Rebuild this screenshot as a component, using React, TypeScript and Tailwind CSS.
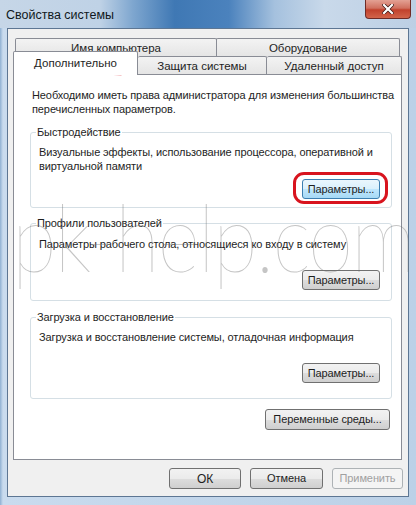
import React from "react";

const Btn = ({
  children,
  className = "",
  disabled = false,
  focused = false,
}: {
  children: React.ReactNode;
  className?: string;
  disabled?: boolean;
  focused?: boolean;
}) => (
  <div
    className={
      "flex items-center justify-center whitespace-nowrap rounded-[3px] border text-[11px] leading-none tracking-[-0.1px] " +
      (focused
        ? "border-[#3c7fb1] bg-[linear-gradient(#eaf6fd_0%,#d9f0fc_50%,#bee6fd_51%,#a7d9f5_100%)] text-[#1e1e1e] "
        : disabled
        ? "border-[#adb2b5] bg-[#f4f4f4] text-[#a0a0a0] "
        : "border-[#707070] bg-[linear-gradient(#f2f2f2_0%,#ebebeb_50%,#dddddd_51%,#cfcfcf_100%)] text-[#1e1e1e] ") +
      className
    }
  >
    {children}
  </div>
);

const Group = ({
  title,
  children,
  className = "",
}: {
  title: string;
  children: React.ReactNode;
  className?: string;
}) => (
  <fieldset className={"ml-[16px] w-[362px] rounded-[3px] border border-[#d5dfe5] " + className}>
    <legend className="ml-[5px] whitespace-nowrap px-[1px] text-[11px] leading-[14px] tracking-[-0.1px]">{title}</legend>
    {children}
  </fieldset>
);

const tabCls =
  "flex justify-center whitespace-nowrap rounded-t-[2px] border border-b-0 border-[#898c95] pt-[2px] text-[11.5px] leading-[14px]";

export default function App() {
  return (
    <div className="relative flex h-[505px] w-[416px] flex-col overflow-hidden bg-[linear-gradient(90deg,#8fb0d2_0px,#c9dbee_3px,#bcd1e7_100%)] font-['Liberation_Sans',Arial,sans-serif] text-[#1e1e1e]">
      {/* title bar */}
      <div className="relative flex h-[28px] items-center bg-[linear-gradient(90deg,#c6d6e7_0%,#bfd2e6_24%,#7ea6cf_32%,#3f78b4_42%,#4b82bd_55%,#a5c1de_66%,#c9d9ea_78%,#bccfe4_100%)]">
        <span className="ml-[6px] mt-[2px] text-[12.5px] text-[#101820]">Свойства системы</span>
        <div className="absolute right-[5px] top-0 flex h-[19px] w-[46px] items-center justify-center rounded-b-[4px] border border-t-0 border-[#6e2b26] bg-[linear-gradient(#e3a194_0%,#d0705f_45%,#c1412c_55%,#d2644a_100%)]">
          <svg width="12" height="10" viewBox="0 0 12 10">
            <path d="M2 1 L10 9 M10 1 L2 9" stroke="#3a1410" strokeWidth="3.6" strokeLinecap="square" />
            <path d="M2 1 L10 9 M10 1 L2 9" stroke="#ffffff" strokeWidth="2.2" strokeLinecap="square" />
          </svg>
        </div>
      </div>

      {/* client area */}
      <div className="ml-[7px] mb-[8px] flex w-[402px] flex-1 flex-col border border-[#5d7693] bg-[#f0f0f0]">
        <div className="ml-[5px] mt-[9px] w-[389px]">
          {/* tabs row 1 */}
          <div className="flex h-[18px] pl-[2px]">
            <div className={tabCls + " w-[202px] bg-[linear-gradient(#f3f3f3,#e5e5e5)]"}>Имя компьютера</div>
            <div className={tabCls + " -ml-px w-[184px] bg-[linear-gradient(#f3f3f3,#e5e5e5)]"}>Оборудование</div>
          </div>
          {/* tabs row 2 */}
          <div className="flex h-[18px] items-end">
            <div className={tabCls + " relative z-10 -mb-px h-[24px] w-[125px] bg-white pt-[4px]"}>Дополнительно</div>
            <div className={tabCls + " h-[18px] w-[129px] border-l-0 bg-[linear-gradient(#f3f3f3,#e5e5e5)]"}>Защита системы</div>
            <div className={tabCls + " h-[18px] w-[135px] border-l-0 bg-[linear-gradient(#f3f3f3,#e5e5e5)]"}>Удаленный доступ</div>
          </div>
          {/* panel */}
          <div className="flex h-[386px] flex-col border border-[#898c95] bg-white text-[11px] leading-[14px] tracking-[-0.1px]">
            <p className="ml-[18px] mt-[13px] whitespace-nowrap">
              Необходимо иметь права администратора для изменения большинства
              <br />
              перечисленных параметров.
            </p>

            <Group title="Быстродействие" className="mt-[9px] pb-[8px]">
              <p className="ml-[8px] mt-[6px] whitespace-nowrap">
                Визуальные эффекты, использование процессора, оперативной и
                <br />
                виртуальной памяти
              </p>
              <div className="mr-[11px] mt-[6px] flex justify-end">
                <Btn focused className="h-[20px] w-[78px]">Параметры...</Btn>
              </div>
            </Group>

            <Group title="Профили пользователей" className="mt-[8px] pb-[10px]">
              <p className="ml-[8px] mt-[7px] whitespace-nowrap">
                Параметры рабочего стола, относящиеся ко входу в систему
              </p>
              <div className="mr-[11px] mt-[19px] flex justify-end">
                <Btn className="h-[20px] w-[78px]">Параметры...</Btn>
              </div>
            </Group>

            <Group title="Загрузка и восстановление" className="mt-[9px] pb-[15px]">
              <p className="ml-[8px] mt-[6px] whitespace-nowrap">
                Загрузка и восстановление системы, отладочная информация
              </p>
              <div className="mr-[11px] mt-[19px] flex justify-end">
                <Btn className="h-[20px] w-[78px]">Параметры...</Btn>
              </div>
            </Group>

            <div className="mr-[11px] mt-[10px] flex justify-end">
              <Btn className="h-[21px] w-[125px]">Переменные среды...</Btn>
            </div>
          </div>
        </div>

        {/* bottom buttons */}
        <div className="mr-[5px] mt-[8px] flex justify-end gap-[9px]">
          <Btn className="h-[21px] w-[72px] text-[12px]">ОК</Btn>
          <Btn className="h-[21px] w-[73px]">Отмена</Btn>
          <Btn disabled className="h-[21px] w-[71px]">Применить</Btn>
        </div>
      </div>

      {/* annotations over the screenshot */}
      <svg className="pointer-events-none absolute left-[30px] top-[70px]" width="94" height="6" viewBox="0 0 94 6">
        <path d="M2 3 Q 45 2 91 4" stroke="#d8141e" strokeWidth="2.6" fill="none" strokeLinecap="round" />
      </svg>
      <div className="pointer-events-none absolute left-[293px] top-[172px] h-[32px] w-[95px] rounded-[11px] border-[3px] border-[#d8141e]" />

      {/* watermark */}
      <div className="pointer-events-none absolute left-[12px] top-[188px] origin-top scale-y-[1.15] whitespace-nowrap font-['Lato',sans-serif] text-[82px] font-thin leading-none tracking-[-2px] text-[rgba(110,110,110,0.4)]">
        pk-help.com
      </div>
    </div>
  );
}
